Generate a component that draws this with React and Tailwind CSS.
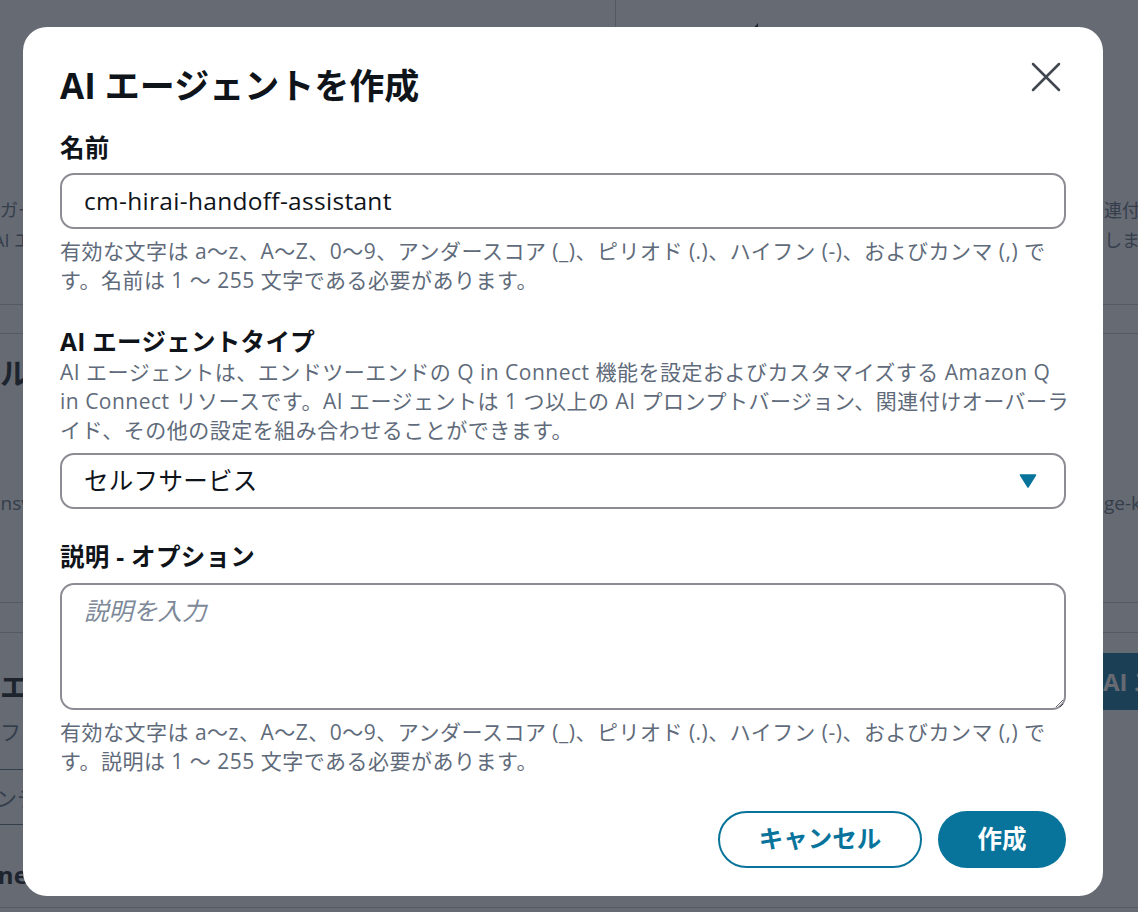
import React from "react";

const font = { fontFamily: '"Open Sans", "Noto Sans CJK JP", sans-serif' };

function Background() {
  return (
    <div className="h-[912px] overflow-hidden bg-white text-[#0f141a]">
      <div className="h-[180px] flex">
        <div className="w-[616px] border-r border-[#c6c6cd]" />
        <div className="flex-1 pl-[128px] pt-[21px]">
          <svg width="16" height="16" viewBox="0 0 16 16">
            <path d="M2 16 L14 2 L14 16 Z" fill="#0f141a" />
          </svg>
        </div>
      </div>

      <div className="mt-[15px] text-[18px] leading-[30px] text-[#5f6b7a] whitespace-nowrap">
        <div className="grid grid-cols-[1104px_1fr] overflow-hidden">
          <div className="overflow-hidden">ガードレールを設定して、応答を制御します。</div>
          <div className="overflow-hidden">連付けられた</div>
        </div>
        <div className="grid grid-cols-[1104px_1fr] overflow-hidden">
          <div className="overflow-hidden">
            <span className="-ml-[7px] inline-block">AI エージェントに適用されます。</span>
          </div>
          <div className="overflow-hidden">しました</div>
        </div>
      </div>

      <div className="mt-[49px] h-[30px] border-y border-[#c6c6cd]" />

      <div className="mt-[21px] h-[36px] leading-[36px] text-[30px] font-bold whitespace-nowrap overflow-hidden">
        ルール
      </div>

      <div className="mt-[97px] grid grid-cols-[1104px_1fr] text-[19px] leading-[30px] text-[#5f6b7a] whitespace-nowrap overflow-hidden">
        <div className="overflow-hidden">
          <span className="-ml-[10px] inline-block">answer-recommendation</span>
        </div>
        <div className="overflow-hidden">ge-kb</div>
      </div>

      <div className="mt-[84px] h-[31px] border-y border-[#c6c6cd]" />

      <div className="mt-[20px] grid grid-cols-[1098px_1fr] h-[57px] whitespace-nowrap overflow-hidden">
        <div className="text-[28px] font-bold leading-[57px] pt-[6px] overflow-hidden">エージェント</div>
        <div className="bg-[#08749b] text-white text-[24px] font-bold leading-[57px] pl-[5px] overflow-hidden">
          AI エージェントを作成
        </div>
      </div>

      <div className="mt-[7px] text-[21px] leading-[30px] text-[#5f6b7a] whitespace-nowrap overflow-hidden">
        ファイル
      </div>
      <div className="mt-[22px] border-t border-[#5f6b7a] w-[400px]" />
      <div className="mt-[13px] text-[21px] leading-[30px] text-[#5f6b7a] whitespace-nowrap overflow-hidden">
        <span className="-ml-[4px] inline-block">ンテンツ</span>
      </div>
      <div className="mt-[11px] border-t border-[#5f6b7a] w-[400px]" />
      <div className="mt-[35px] text-[24px] leading-[30px] font-bold whitespace-nowrap overflow-hidden">
        <span className="-ml-[17px] inline-block">one</span>
      </div>
      <div className="mt-[17px] border-t border-[#c6c6cd]" />
    </div>
  );
}

function Helper({ lines }) {
  return (
    <div className="text-[21px] leading-[29px] tracking-[0.5px] text-[#5f6b7a] whitespace-nowrap">
      {lines.map((l, i) => (
        <p key={i}>{l}</p>
      ))}
    </div>
  );
}

export default function App() {
  return (
    <div className="relative w-[1138px] h-[912px] overflow-hidden" style={font}>
      <Background />

      <div className="absolute inset-0 bg-[#232b37]/70 pt-[27px] pl-[23px]">
        <div className="w-[1080px] h-[869px] bg-white rounded-[24px] pt-[39px] px-[37px] text-[#0f141a]">
          <div className="flex justify-between">
            <h2 className="text-[35px] leading-[40px] font-bold">AI エージェントを作成</h2>
            <button className="-mt-[4px] mr-[5px] w-[30px] h-[30px] text-[#414750]">
              <svg width="30" height="30" viewBox="0 0 30 30" fill="none">
                <path d="M2 2 L28 28 M28 2 L2 28" stroke="currentColor" strokeWidth="2.5" strokeLinecap="round" />
              </svg>
            </button>
          </div>

          <div className="mt-[26px] text-[24.5px] tracking-[0.3px] leading-[32px] font-bold">名前</div>
          <div className="mt-[9px] h-[56px] border-2 border-[#8c8c94] rounded-[14px] px-[22px] flex items-center text-[24.5px] tracking-[0.3px]">
            cm-hirai-handoff-assistant
          </div>
          <div className="mt-[8px]">
            <Helper
              lines={[
                "有効な文字は a〜z、A〜Z、0〜9、アンダースコア (_)、ピリオド (.)、ハイフン (-)、およびカンマ (,) で",
                "す。名前は 1 〜 255 文字である必要があります。",
              ]}
            />
          </div>

          <div className="mt-[31px] text-[24.5px] tracking-[0.3px] leading-[32px] font-bold">AI エージェントタイプ</div>
          <Helper
            lines={[
              "AI エージェントは、エンドツーエンドの Q in Connect 機能を設定およびカスタマイズする Amazon Q",
              "in Connect リソースです。AI エージェントは 1 つ以上の AI プロンプトバージョン、関連付けオーバーラ",
              "イド、その他の設定を組み合わせることができます。",
            ]}
          />
          <div className="mt-[8px] h-[56px] border-2 border-[#8c8c94] rounded-[14px] pl-[22px] pr-[27px] flex items-center justify-between text-[24.5px] tracking-[0.3px]">
            <span>セルフサービス</span>
            <svg width="18" height="14" viewBox="0 0 18 14">
              <path d="M1.5 1 H16.5 L9 13 Z" fill="#08749b" stroke="#08749b" strokeWidth="1.5" strokeLinejoin="round" />
            </svg>
          </div>

          <div className="mt-[32px] text-[24.5px] tracking-[0.3px] leading-[32px] font-bold">説明 - オプション</div>
          <textarea
            className="mt-[10px] block w-full h-[127px] border-2 border-[#8c8c94] rounded-[14px] px-[22px] py-[10px] text-[24.5px] leading-[32px] placeholder:italic placeholder:text-[#7d8998] outline-none"
            placeholder="説明を入力"
          />
          <div className="mt-[8px]">
            <Helper
              lines={[
                "有効な文字は a〜z、A〜Z、0〜9、アンダースコア (_)、ピリオド (.)、ハイフン (-)、およびカンマ (,) で",
                "す。説明は 1 〜 255 文字である必要があります。",
              ]}
            />
          </div>

          <div className="mt-[35px] flex justify-end gap-[16px]">
            <button className="h-[57px] w-[204px] rounded-full border-2 border-[#08749b] text-[#08749b] text-[24.5px] font-bold">
              キャンセル
            </button>
            <button className="h-[57px] w-[128px] rounded-full bg-[#08749b] text-white text-[24.5px] font-bold">
              作成
            </button>
          </div>
        </div>
      </div>
    </div>
  );
}
